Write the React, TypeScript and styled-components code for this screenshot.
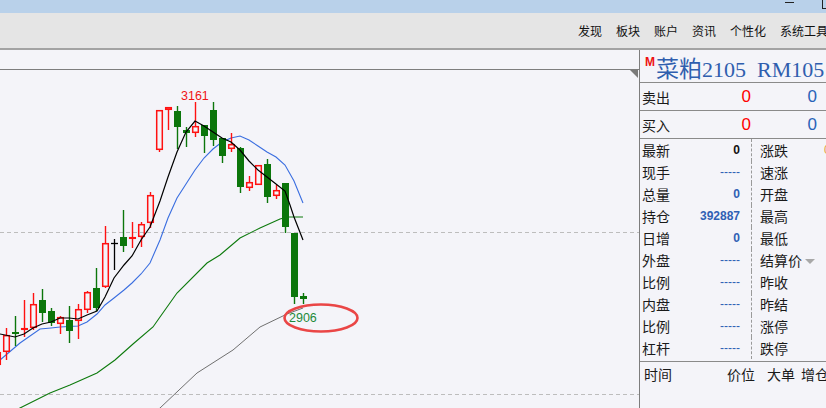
import React from "react";
import styled, { createGlobalStyle } from "styled-components";

const Global = createGlobalStyle`
  html, body { margin: 0; padding: 0; background: #f4f4f9; }
  body { font-family: "Noto Sans CJK SC", "Liberation Sans", sans-serif; }
`;

const CJK = `"Noto Sans CJK SC", "Liberation Sans", sans-serif`;
const NUM = `"Liberation Sans", "Noto Sans CJK SC", sans-serif`;

const Root = styled.div`
  width: 826px;
  height: 408px;
  overflow: hidden;
  display: flex;
  flex-direction: column;
  background: #f4f4f9;
`;

const TitleBar = styled.div`
  height: 13px;
  flex: none;
  background: #b9d1ea;
  display: flex;
  align-items: flex-start;
  padding-left: 785px;
  box-sizing: border-box;
  overflow: hidden;
`;

const MinBtn = styled.span`
  width: 9px;
  height: 1px;
  margin-top: 2px;
  background: #222;
  flex: none;
`;

const MaxBtn = styled.span`
  width: 9px;
  height: 9px;
  margin-left: 28px;
  margin-top: -2px;
  border: 1px solid #222;
  flex: none;
`;

const MenuBar = styled.div`
  height: 35px;
  flex: none;
  background: #e5e5e5;
  border-bottom: 2px solid #a3a3a3;
  display: flex;
  align-items: center;
  gap: 14px;
  padding-left: 578px;
  white-space: nowrap;
  overflow: hidden;
`;

const MenuItem = styled.span`
  font-family: ${CJK};
  font-size: 12px;
  color: #111;
  flex: none;
`;

const Main = styled.div`
  flex: 1;
  display: flex;
  min-height: 0;
`;

const ChartArea = styled.div`
  width: 639px;
  flex: none;
  border-right: 1px solid #7d7d7d;
  display: flex;
  flex-direction: column;
`;

const ChartHeader = styled.div`
  height: 19px;
  flex: none;
  border-bottom: 1px solid #7d7d7d;
`;

const ChartSvg = styled.svg`
  display: block;
  flex: 1;
`;

const Panel = styled.div`
  width: 186px;
  flex: none;
  display: flex;
  flex-direction: column;
  overflow: hidden;
`;

const TitleRow = styled.div`
  height: 32px;
  flex: none;
  border-bottom: 1px solid #8a8a8a;
  display: flex;
  align-items: flex-start;
  padding-left: 5px;
  white-space: nowrap;
`;

const Market = styled.span`
  font-family: ${NUM};
  font-weight: bold;
  font-size: 12px;
  color: #ee1111;
  margin-top: 5px;
  margin-right: 1px;
`;

const TitleText = styled.span`
  font-family: "Liberation Serif", "Noto Sans CJK SC", serif;
  font-size: 22px;
  line-height: 30px;
  color: #2f5eae;
  margin-top: 2px;
`;

const TitleCjk = styled.span`
  font-family: ${CJK};
  font-size: 23px;
`;

const QuoteRow = styled.div`
  height: 27px;
  flex: none;
  border-bottom: 1px solid #8a8a8a;
  display: grid;
  grid-template-columns: 1fr 44px 66px;
  align-items: center;
  padding: 0 9px 0 2px;
`;

const Label = styled.span`
  font-family: ${CJK};
  font-size: 14px;
  color: #1a1a1a;
  white-space: nowrap;
`;

const BigNum = styled.span<{ $c: string }>`
  font-family: ${NUM};
  font-size: 17px;
  color: ${(p) => p.$c};
  text-align: right;
`;

const Stats = styled.div`
  display: grid;
  grid-template-columns: 112px 72px 40px;
  grid-auto-rows: 22px;
  padding-bottom: 2px;
  flex: none;
`;

const LeftCell = styled.div`
  display: flex;
  align-items: center;
  justify-content: space-between;
  padding: 0 11px 0 2px;
  border-right: 1px dashed #9a9a9a;
`;

const RightCell = styled.div`
  display: flex;
  align-items: center;
  padding-left: 8px;
  white-space: nowrap;
`;

const ExtraCell = styled.div`
  display: flex;
  align-items: center;
`;

const Val = styled.span<{ $c: string; $bold?: boolean }>`
  font-family: ${NUM};
  font-size: 12px;
  font-weight: ${(p) => (p.$bold ? "bold" : "normal")};
  color: ${(p) => p.$c};
`;

const Caret = styled.span`
  width: 0;
  height: 0;
  margin-left: 3px;
  margin-top: 2px;
  border-left: 5px solid transparent;
  border-right: 5px solid transparent;
  border-top: 5px solid #a8a8a8;
`;

const TickHeader = styled.div`
  border-top: 1px solid #8a8a8a;
  height: 24px;
  flex: none;
  display: grid;
  grid-template-columns: 83px 40px 34px 40px;
  align-items: center;
  padding-left: 4px;
  white-space: nowrap;
`;

type Candle = [number, number, number, number, number, "r" | "g" | "k"];

const candles: Candle[] = [
  [-3, 352, 365, 345, 372, "r"],
  [6, 335, 352, 328, 360, "r"],
  [15, 332, 334, 316, 346, "g"],
  [24, 328, 330, 300, 337, "r"],
  [33, 304, 328, 293, 330, "r"],
  [42, 300, 313, 289, 322, "g"],
  [51, 311, 323, 308, 326, "g"],
  [60, 317, 324, 316, 334, "r"],
  [69, 320, 331, 306, 343, "g"],
  [78, 309, 321, 304, 339, "r"],
  [87, 292, 310, 291, 313, "r"],
  [96, 288, 308, 268, 311, "g"],
  [105, 243, 287, 226, 288, "r"],
  [114, 243, 243, 239, 270, "k"],
  [123, 237, 246, 210, 252, "g"],
  [132, 237, 239, 222, 248, "r"],
  [141, 224, 237, 222, 247, "r"],
  [150, 195, 223, 192, 228, "r"],
  [159, 110, 150, 110, 152, "r"],
  [168, 107, 110, 107, 130, "r"],
  [177, 111, 127, 106, 149, "g"],
  [186, 130, 133, 127, 147, "g"],
  [195, 126, 133, 102, 137, "r"],
  [204, 125, 136, 125, 153, "g"],
  [213, 110, 140, 102, 146, "g"],
  [222, 138, 156, 138, 163, "g"],
  [231, 144, 149, 133, 152, "r"],
  [240, 148, 187, 147, 193, "g"],
  [249, 182, 188, 176, 191, "r"],
  [258, 165, 185, 165, 185, "r"],
  [267, 164, 197, 159, 203, "g"],
  [276, 190, 196, 185, 199, "r"],
  [285, 183, 227, 183, 233, "g"],
  [294, 233, 297, 233, 304, "g"],
  [303, 296, 299, 293, 304, "g"],
];

const ma5 =
  "0,334 15,337 24,334 33,328 42,324 51,322 60,318 69,318 78,319 87,315 97,311 105,297 114,278 124,265 132,256 141,240 150,227 160,201 168,177 177,152 186,132 195,121 204,126 213,132 222,138 231,142 240,150 249,161 258,170 267,177 276,184 285,191 290,205 294,217 303,240";
const ma10 =
  "0,360 20,343 40,329 51,328 60,327 78,326 87,322 97,314 105,305 114,298 124,290 132,283 141,274 150,263 160,240 168,218 177,198 186,184 195,170 204,158 213,149 222,142 231,138 240,136 249,140 258,146 267,152 276,157 285,165 294,181 303,203";
const ma20 =
  "15,411 20,408 50,393 70,385 97,373 115,360 133,344 153,327 160,317 177,293 207,263 220,255 240,238 260,228 280,219 287,217 303,217";
const ma60 = "155,412 160,408 197,373 233,350 260,327 287,314 303,308";

const RED = "#ff1111";
const GREEN = "#0b760b";

function CandleMark({ c }: { c: Candle }) {
  const [x, top, bottom, wt, wb, t] = c;
  if (t === "g") {
    return (
      <g>
        <line x1={x + 0.5} x2={x + 0.5} y1={wt} y2={wb} stroke={GREEN} strokeWidth={1.4} />
        <rect x={x - 3} y={top} width={7} height={Math.max(bottom - top, 2)} fill={GREEN} />
      </g>
    );
  }
  if (t === "k") {
    return (
      <g>
        <line x1={x + 0.5} x2={x + 0.5} y1={wt} y2={wb} stroke="#000" strokeWidth={1.3} />
        <line x1={x - 3} x2={x + 4} y1={top + 0.5} y2={top + 0.5} stroke="#000" strokeWidth={1.3} />
      </g>
    );
  }
  return (
    <g>
      {wt < top && <line x1={x + 0.5} x2={x + 0.5} y1={wt} y2={top} stroke={RED} strokeWidth={1.4} />}
      {wb > bottom && <line x1={x + 0.5} x2={x + 0.5} y1={bottom} y2={wb} stroke={RED} strokeWidth={1.4} />}
      <rect
        x={x - 2.3}
        y={top + 0.7}
        width={5.6}
        height={Math.max(bottom - top - 1.4, 0.6)}
        fill="none"
        stroke={RED}
        strokeWidth={1.5}
      />
    </g>
  );
}

function Chart() {
  return (
    <ChartSvg viewBox="0 70 639 338" width={639} height={338}>
      <line x1={0} x2={639} y1={232.5} y2={232.5} stroke="#bdbdbd" strokeDasharray="4 3" />
      <line x1={0} x2={639} y1={394.5} y2={394.5} stroke="#bdbdbd" strokeDasharray="4 3" />
      <polygon points="630,70 638,70 638,78" fill="#7a7a7a" />
      <polyline points={ma60} fill="none" stroke="#707070" strokeWidth={1} />
      <polyline points={ma20} fill="none" stroke="#0d7a0d" strokeWidth={1.1} />
      <polyline points={ma10} fill="none" stroke="#3a6ee0" strokeWidth={1.1} />
      {candles.map((c, i) => (
        <CandleMark key={i} c={c} />
      ))}
      <polyline points={ma5} fill="none" stroke="#000" strokeWidth={1.2} />
      <text x={181} y={100} fontFamily={NUM} fontSize={12.5} fill="#f01515">
        3161
      </text>
      <text x={289} y={322} fontFamily={NUM} fontSize={12.5} fill="#1d8a3a">
        2906
      </text>
      <ellipse cx={321} cy={318} rx={36.5} ry={13.5} fill="none" stroke="#ea4646" strokeWidth={2.6} />
    </ChartSvg>
  );
}

type Row = { l: string; v: string; vc: string; bold?: boolean; r: string; caret?: boolean; extra?: string };

const BLUE = "#2f60b4";

const rows: Row[] = [
  { l: "最新", v: "0", vc: "#111", bold: true, r: "涨跌", extra: "0" },
  { l: "现手", v: "-----", vc: BLUE, r: "速涨" },
  { l: "总量", v: "0", vc: BLUE, bold: true, r: "开盘" },
  { l: "持仓", v: "392887", vc: BLUE, bold: true, r: "最高" },
  { l: "日增", v: "0", vc: BLUE, bold: true, r: "最低" },
  { l: "外盘", v: "-----", vc: BLUE, r: "结算价", caret: true },
  { l: "比例", v: "-----", vc: BLUE, r: "昨收" },
  { l: "内盘", v: "-----", vc: BLUE, r: "昨结" },
  { l: "比例", v: "-----", vc: BLUE, r: "涨停" },
  { l: "杠杆", v: "-----", vc: BLUE, r: "跌停" },
];

export default function App() {
  return (
    <Root>
      <Global />
      <TitleBar>
        <MinBtn />
        <MaxBtn />
      </TitleBar>
      <MenuBar>
        {["发现", "板块", "账户", "资讯", "个性化", "系统工具"].map((m) => (
          <MenuItem key={m}>{m}</MenuItem>
        ))}
      </MenuBar>
      <Main>
        <ChartArea>
          <ChartHeader />
          <Chart />
        </ChartArea>
        <Panel>
          <TitleRow>
            <Market>M</Market>
            <TitleText>
              <TitleCjk>菜粕</TitleCjk>2105&nbsp; RM105
            </TitleText>
          </TitleRow>
          <QuoteRow>
            <Label>卖出</Label>
            <BigNum $c="#ff0000">0</BigNum>
            <BigNum $c="#2a62b8">0</BigNum>
          </QuoteRow>
          <QuoteRow>
            <Label>买入</Label>
            <BigNum $c="#ff0000">0</BigNum>
            <BigNum $c="#2a62b8">0</BigNum>
          </QuoteRow>
          <Stats>
            {rows.map((r, i) => (
              <React.Fragment key={i}>
                <LeftCell>
                  <Label>{r.l}</Label>
                  <Val $c={r.vc} $bold={r.bold}>
                    {r.v}
                  </Val>
                </LeftCell>
                <RightCell>
                  <Label>{r.r}</Label>
                  {r.caret && <Caret />}
                </RightCell>
                <ExtraCell>{r.extra && <Val $c="#e8a040">{r.extra}</Val>}</ExtraCell>
              </React.Fragment>
            ))}
          </Stats>
          <TickHeader>
            <Label>时间</Label>
            <Label>价位</Label>
            <Label>大单</Label>
            <Label>增仓</Label>
          </TickHeader>
        </Panel>
      </Main>
    </Root>
  );
}
